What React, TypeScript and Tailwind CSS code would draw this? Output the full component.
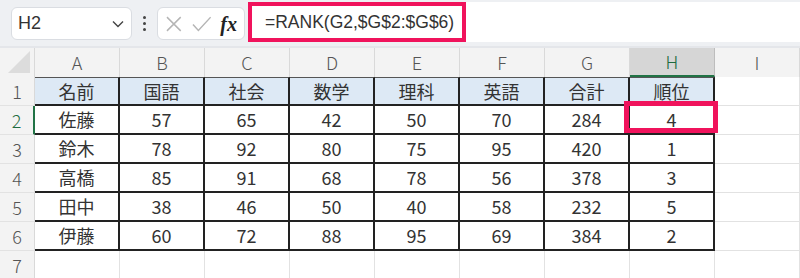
import React from 'react';

const cols = ['A', 'B', 'C', 'D', 'E', 'F', 'G', 'H', 'I'];
const header = ['名前', '国語', '社会', '数学', '理科', '英語', '合計', '順位'];
const rows = [
  ['佐藤', '57', '65', '42', '50', '70', '284', '4'],
  ['鈴木', '78', '92', '80', '75', '95', '420', '1'],
  ['高橋', '85', '91', '68', '78', '56', '378', '3'],
  ['田中', '38', '46', '50', '40', '58', '232', '5'],
  ['伊藤', '60', '72', '88', '95', '69', '384', '2'],
];

const font = "font-['Noto_Sans_CJK_JP','Noto_Sans',sans-serif]";

const App = () => {
  return (
    <div className={`w-[800px] h-[278px] overflow-hidden bg-white ${font}`}>
      {/* toolbar */}
      <div className="h-[46px] bg-[#eef0f3] flex items-start">
        <div className="ml-[11px] mt-[7px] w-[121px] h-[33px] bg-white rounded-[6px] border border-[#dadde2] flex items-center justify-between pl-[6px] pr-[7px]">
          <span className="text-[18px] text-[#333] font-['Liberation_Sans',sans-serif]">H2</span>
          <svg width="12" height="8" viewBox="0 0 12 8" fill="none" stroke="#444" strokeWidth="1.4">
            <path d="M1 1.5l5 5 5-5" />
          </svg>
        </div>
        <div className="w-[25px] h-[46px] flex flex-col items-center justify-center gap-[3px]">
          <span className="w-[3px] h-[3px] bg-[#444] rounded-full" />
          <span className="w-[3px] h-[3px] bg-[#444] rounded-full" />
          <span className="w-[3px] h-[3px] bg-[#444] rounded-full" />
        </div>
        <div className="mt-[7px] w-[88px] h-[33px] bg-white rounded-[6px] border border-[#dadde2] flex items-center px-[7px] gap-[9px]">
          <svg width="18" height="18" viewBox="0 0 18 18" stroke="#b5b5b5" strokeWidth="1.5" fill="none">
            <path d="M2 2l14 14M16 2L2 16" />
          </svg>
          <svg width="20" height="18" viewBox="0 0 20 18" stroke="#b5b5b5" strokeWidth="1.5" fill="none">
            <path d="M1 9.5l5.5 6L19 2" />
          </svg>
          <span className="text-[20px] italic font-bold text-[#222] font-['Liberation_Serif',serif] leading-none">fx</span>
        </div>
        <div className="ml-[3px] mt-[2px] flex-1 h-[40px] bg-white flex">
          <div className="w-[218px] h-[40px] border-[4px] border-[#f0135c] flex items-center pl-[13px]">
            <span className="text-[17.5px] text-[#333] font-['Liberation_Sans',sans-serif]">=RANK(G2,$G$2:$G$6)</span>
          </div>
        </div>
      </div>
      <div className="h-[2px] bg-[#e4e6ea]" />

      {/* column headers */}
      <div className="flex h-[29px] bg-[#f3f3f3]">
        <div className="w-[35px] h-full border-r border-[#d9d9d9] flex items-end justify-end p-[4px]">
          <svg width="22" height="22" viewBox="0 0 22 22">
            <path d="M22 0V22H0Z" fill="#dcdcdc" />
          </svg>
        </div>
        {cols.map((c) => (
          <div
            key={c}
            className={`w-[85px] h-full flex items-center justify-center text-[18px] font-light border-r ${
              c === 'H'
                ? 'bg-[#d6d6d6] text-[#1e6b40] border-b-2 border-b-[#217346] border-r-[#bdbdbd]'
                : 'text-[#555] border-[#d9d9d9]'
            }`}
          >
            {c}
          </div>
        ))}
      </div>

      {/* rows */}
      {[header, ...rows, null].map((r, i) => (
        <div key={i} className="flex h-[29px]">
          <div
            className={`w-[35px] h-full bg-[#f3f3f3] flex items-center justify-center text-[18px] font-light border-b border-[#e2e2e2] ${
              i === 1 ? 'text-[#1e6b40] border-r-2 border-r-[#217346]' : 'text-[#555] border-r border-r-[#d9d9d9]'
            }`}
          >
            {i + 1}
          </div>
          {cols.map((c, j) => {
            const inTable = r !== null && j < 8;
            const isH2 = i === 1 && j === 7;
            return (
              <div
                key={c}
                className={`w-[85px] h-full flex items-center justify-center text-[18px] text-[#333] relative ${
                  inTable
                    ? `border-r-2 border-b-2 border-[#222] ${i === 0 ? 'bg-[#dde9f5] border-t border-t-[#555]' : 'bg-white'}`
                    : 'border-r border-b border-[#e2e2e2]'
                }`}
              >
                {r && j < 8 ? r[j] : ''}
                {isH2 && (
                  <span className="absolute -left-[6px] -right-[5px] -top-[5px] bottom-0 border-[5px] border-[#f0135c]" />
                )}
              </div>
            );
          })}
        </div>
      ))}
    </div>
  );
};

export default App;
